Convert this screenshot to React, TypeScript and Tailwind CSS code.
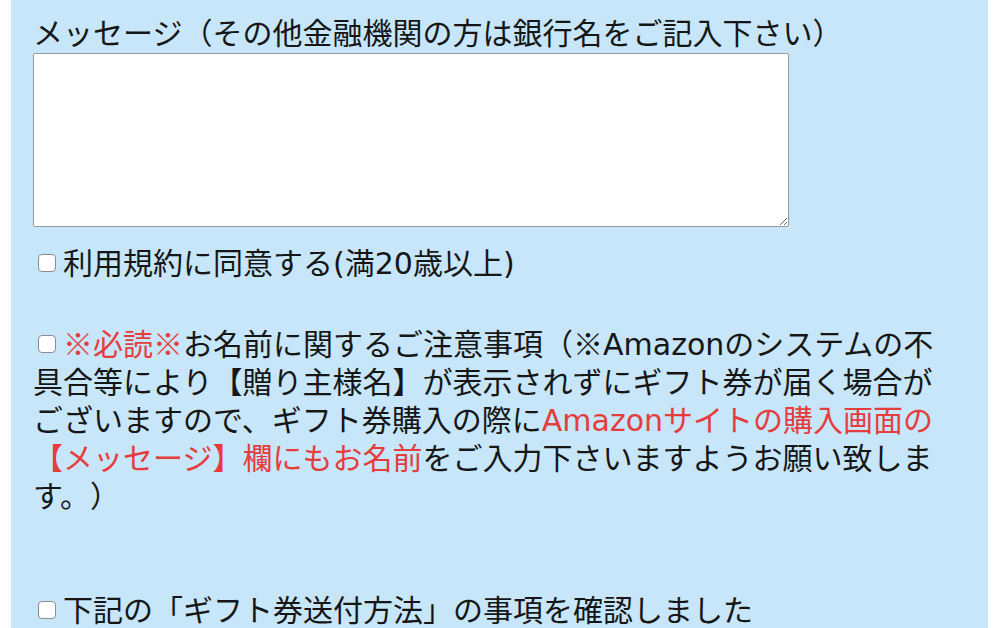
import React from "react";

function Box() {
  return (
    <span className="inline-block box-border shrink-0 align-middle size-[18px] min-w-[18px] ml-[5px] mr-[7px] -mt-[5px] bg-white border border-[#8c8c8c] rounded-[4px]" />
  );
}

function L({ children }: { children: React.ReactNode }) {
  return (
    <span style={{ fontFamily: '"DejaVu Sans", sans-serif' }} className="text-[30px] leading-[20px]">
      {children}
    </span>
  );
}

export default function App() {
  const red = "text-[#e53d3d]";
  return (
    <div className="bg-white px-[11px] w-[999px] h-[628px] overflow-hidden">
      <div
        className="bg-[#c7e6f9] h-[628px] pl-[22px] pt-[12px] text-[30px] leading-[38px] text-[#161616] [text-spacing-trim:space-all]"
        style={{ fontFamily: '"Noto Sans CJK JP", "Noto Sans", sans-serif' }}
      >
        <div>メッセージ（その他金融機関の方は銀行名をご記入下さい）</div>
        <textarea className="block mt-[3px] w-[756px] h-[174px] bg-white border border-[#9a9a9a] rounded-[2px] outline-none resize" />
        <div className="mt-[15px] h-[38px]">
          <Box />
          利用規約に同意する<L>(</L>満<L>20</L>歳以上<L>)</L>
        </div>
        <div className="mt-[43px] whitespace-nowrap">
          <Box />
          <span className={red}>※必読※</span>お名前に関するご注意事項（※<L>Amazon</L>のシステムの不
          <br />
          具合等により【贈り主様名】が表示されずにギフト券が届く場合が
          <br />
          ございますので、ギフト券購入の際に
          <span className={red}><L>Amazon</L>サイトの購入画面の</span>
          <br />
          <span className={red}>【メッセージ】欄にもお名前</span>をご入力下さいますようお願い致しま
          <br />
          す。）
        </div>
        <div className="mt-[76px]">
          <Box />
          下記の「ギフト券送付方法」の事項を確認しました
        </div>
      </div>
    </div>
  );
}
